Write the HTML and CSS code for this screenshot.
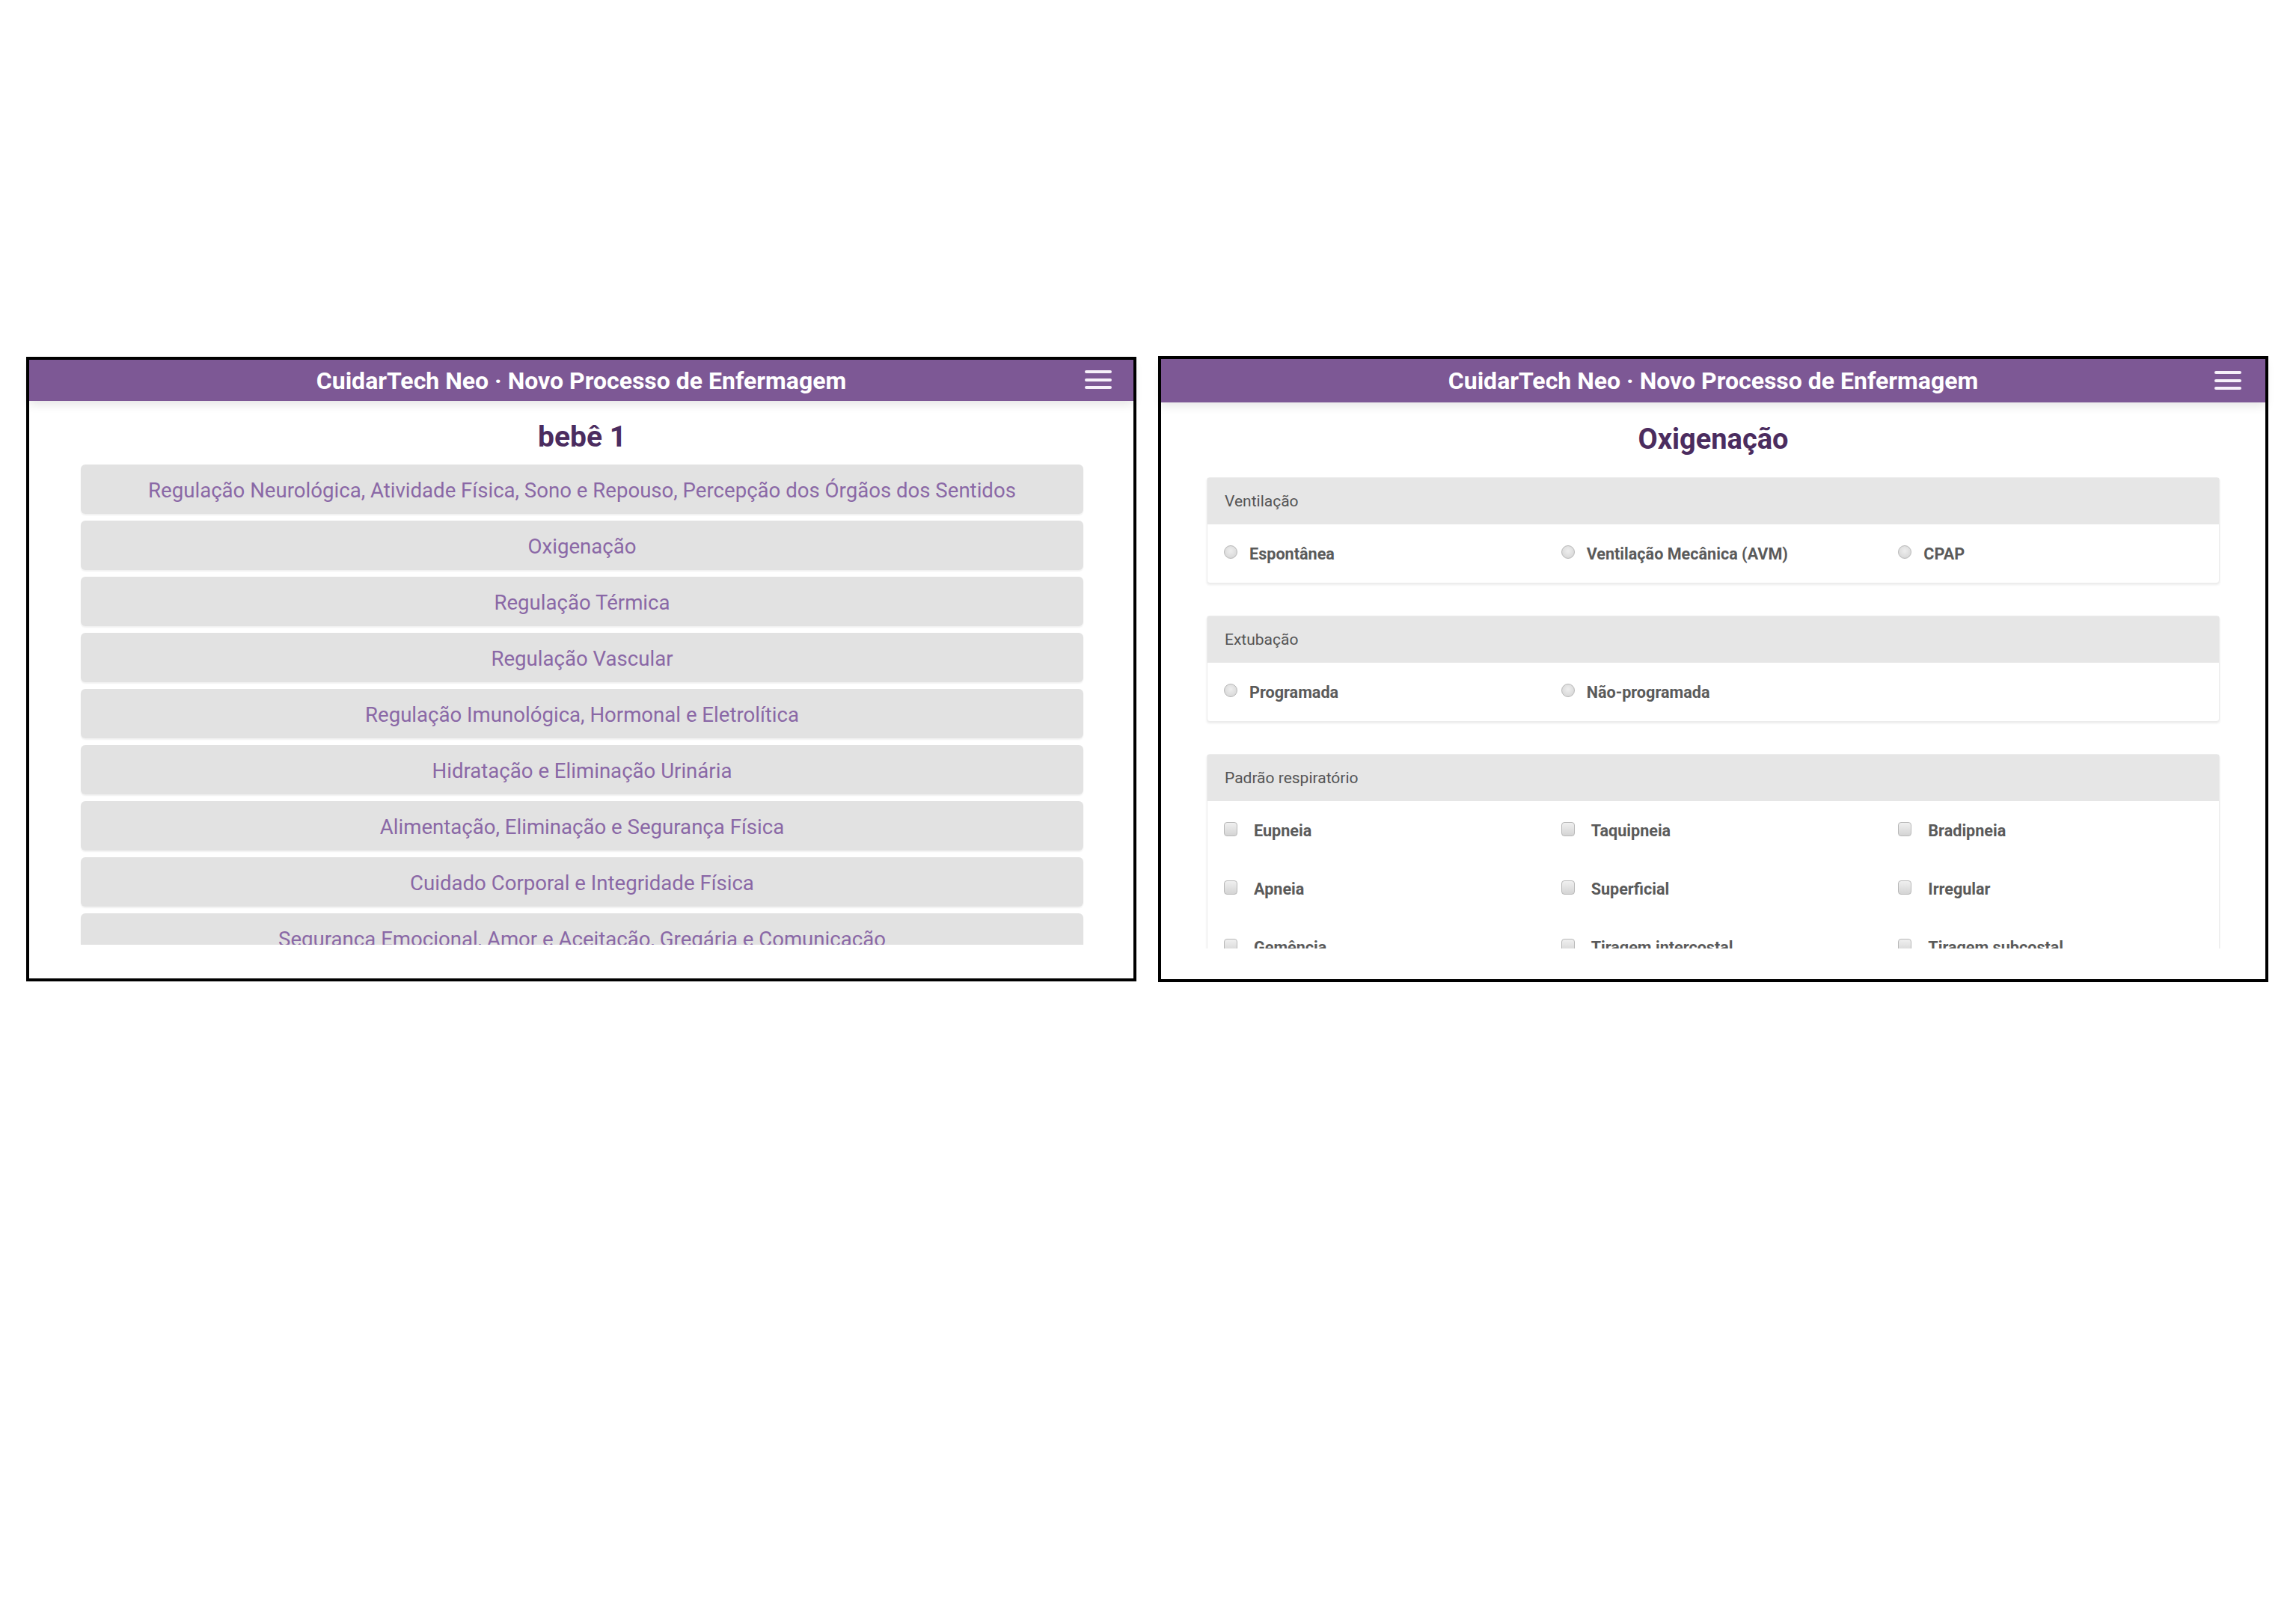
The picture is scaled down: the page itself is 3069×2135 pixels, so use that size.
FILE: index.html
```html
<!DOCTYPE html>
<html lang="pt">
<head>
<meta charset="utf-8">
<title>CuidarTech Neo</title>
<link rel="stylesheet" href="styles.css">
</head>
<body>
<div class="stage">
  <section class="phone">
    <header class="appbar">
      <span class="appbar-title">CuidarTech Neo · Novo Processo de Enfermagem</span>
      <span class="burger"><i></i><i></i><i></i></span>
    </header>
    <div class="viewport">
      <h1 class="page-title">bebê 1</h1>
      <ul class="menu">
        <li class="menu-item">Regulação Neurológica, Atividade Física, Sono e Repouso, Percepção dos Órgãos dos Sentidos</li>
        <li class="menu-item">Oxigenação</li>
        <li class="menu-item">Regulação Térmica</li>
        <li class="menu-item">Regulação Vascular</li>
        <li class="menu-item">Regulação Imunológica, Hormonal e Eletrolítica</li>
        <li class="menu-item">Hidratação e Eliminação Urinária</li>
        <li class="menu-item">Alimentação, Eliminação e Segurança Física</li>
        <li class="menu-item">Cuidado Corporal e Integridade Física</li>
        <li class="menu-item">Segurança Emocional, Amor e Aceitação, Gregária e Comunicação</li>
      </ul>
    </div>
  </section>

  <section class="phone phone-right">
    <header class="appbar appbar-right">
      <span class="appbar-title">CuidarTech Neo · Novo Processo de Enfermagem</span>
      <span class="burger"><i></i><i></i><i></i></span>
    </header>
    <div class="viewport viewport-right">
      <h1 class="page-title page-title-right">Oxigenação</h1>

      <div class="card">
        <div class="card-head">Ventilação</div>
        <div class="card-body">
          <label class="opt"><span class="radio"></span>Espontânea</label>
          <label class="opt"><span class="radio"></span>Ventilação Mecânica (AVM)</label>
          <label class="opt"><span class="radio"></span>CPAP</label>
        </div>
      </div>

      <div class="card">
        <div class="card-head">Extubação</div>
        <div class="card-body">
          <label class="opt"><span class="radio"></span>Programada</label>
          <label class="opt"><span class="radio"></span>Não-programada</label>
        </div>
      </div>

      <div class="card">
        <div class="card-head">Padrão respiratório</div>
        <div class="card-body">
          <label class="opt"><span class="check"></span>Eupneia</label>
          <label class="opt"><span class="check"></span>Taquipneia</label>
          <label class="opt"><span class="check"></span>Bradipneia</label>
          <label class="opt"><span class="check"></span>Apneia</label>
          <label class="opt"><span class="check"></span>Superficial</label>
          <label class="opt"><span class="check"></span>Irregular</label>
          <label class="opt"><span class="check"></span>Gemência</label>
          <label class="opt"><span class="check"></span>Tiragem intercostal</label>
          <label class="opt"><span class="check"></span>Tiragem subcostal</label>
        </div>
      </div>
    </div>
  </section>
</div>
</body>
</html>
```

FILE: styles.css
```css
* { box-sizing: border-box; }

html, body {
  margin: 0;
  padding: 0;
  background: #ffffff;
  font-family: Roboto, "Liberation Sans", Arial, sans-serif;
}

.stage {
  display: flex;
  align-items: flex-start;
  gap: 29px;
  padding: 477px 0 0 35px;
}

.phone {
  width: 1484px;
  height: 835px;
  border: 4px solid #000;
  background: #fff;
  display: flex;
  flex-direction: column;
}

.phone-right {
  margin-top: -1px;
  height: 837px;
}

.appbar {
  position: relative;
  flex: 0 0 55px;
  height: 55px;
  background: #7d5895;
  display: flex;
  align-items: center;
  justify-content: center;
  box-shadow: 0 5px 12px rgba(0, 0, 0, 0.10);
  z-index: 2;
}

.appbar-right {
  flex-basis: 58px;
  height: 58px;
}

.appbar-title {
  color: #fff;
  font-weight: 700;
  font-size: 32px;
  letter-spacing: 0;
}

.burger {
  position: absolute;
  right: 29px;
  top: 14px;
  width: 36px;
  display: flex;
  flex-direction: column;
  gap: 6.5px;
}

.appbar-right .burger {
  right: 32px;
  top: 16px;
}

.burger i {
  display: block;
  height: 4px;
  border-radius: 2px;
  background: #f6f0fa;
}

.viewport {
  height: 727px;
  overflow: hidden;
  padding: 22px 67px 0 69px;
}

.viewport-right {
  height: 730px;
  padding: 24px 61px 0 61px;
}

.page-title {
  margin: 0 0 13px;
  padding-top: 2px;
  text-align: center;
  font-size: 39px;
  line-height: 48px;
  font-weight: 700;
  color: #4b2c5f;
}

.page-title-right {
  font-size: 38px;
  line-height: 50px;
  padding-top: 0;
  margin-bottom: 26px;
}

.menu {
  list-style: none;
  margin: 0;
  padding: 0;
  display: flex;
  flex-direction: column;
  gap: 9px;
}

.menu-item {
  height: 66px;
  flex: 0 0 66px;
  border-radius: 6px;
  background: #e2e2e2;
  box-shadow: 0 2px 2px rgba(0, 0, 0, 0.06);
  display: flex;
  align-items: center;
  justify-content: center;
  padding-top: 3px;
  color: #8a68a6;
  font-size: 27.6px;
  line-height: 1;
}

.card {
  border: 1px solid #ececec;
  border-radius: 4px;
  box-shadow: 0 2px 3px rgba(0, 0, 0, 0.08);
  margin-bottom: 43px;
  background: #fff;
}

.card-head {
  height: 62px;
  background: #e6e6e6;
  display: flex;
  align-items: center;
  padding-left: 23px;
  font-size: 21px;
  color: #555;
}

.card-body {
  display: grid;
  grid-template-columns: repeat(3, 1fr);
  grid-auto-rows: 78px;
}

.opt {
  display: flex;
  align-items: center;
  padding-left: 22px;
  font-size: 21.6px;
  font-weight: 700;
  color: #5a5a5a;
}

.radio {
  width: 18px;
  height: 18px;
  border-radius: 50%;
  border: 1px solid #b8b8b8;
  background: radial-gradient(circle at 50% 40%, #eeeeee 0%, #d2d2d2 100%);
  margin-right: 16px;
  flex: 0 0 18px;
  margin-top: -4px;
}

.check {
  width: 18px;
  height: 19px;
  border-radius: 4px;
  border: 1px solid #b8b8b8;
  background: linear-gradient(#f0f0f0, #d4d4d4);
  margin-right: 22px;
  flex: 0 0 18px;
  margin-top: -4px;
}
```
